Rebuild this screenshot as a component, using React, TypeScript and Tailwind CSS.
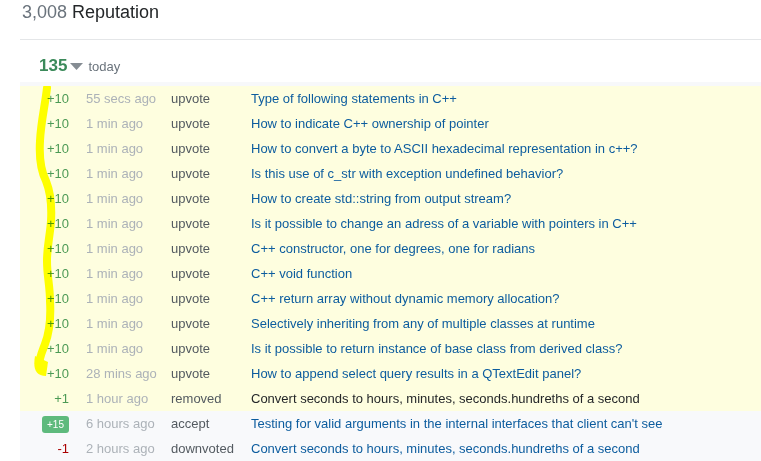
import React from "react";

type Row = {
  amount: string;
  kind: "up" | "badge" | "down";
  time: string;
  type: string;
  title: string;
  link: boolean;
  highlight: boolean;
};

const rows: Row[] = [
  { amount: "+10", kind: "up", time: "55 secs ago", type: "upvote", title: "Type of following statements in C++", link: true, highlight: true },
  { amount: "+10", kind: "up", time: "1 min ago", type: "upvote", title: "How to indicate C++ ownership of pointer", link: true, highlight: true },
  { amount: "+10", kind: "up", time: "1 min ago", type: "upvote", title: "How to convert a byte to ASCII hexadecimal representation in c++?", link: true, highlight: true },
  { amount: "+10", kind: "up", time: "1 min ago", type: "upvote", title: "Is this use of c_str with exception undefined behavior?", link: true, highlight: true },
  { amount: "+10", kind: "up", time: "1 min ago", type: "upvote", title: "How to create std::string from output stream?", link: true, highlight: true },
  { amount: "+10", kind: "up", time: "1 min ago", type: "upvote", title: "Is it possible to change an adress of a variable with pointers in C++", link: true, highlight: true },
  { amount: "+10", kind: "up", time: "1 min ago", type: "upvote", title: "C++ constructor, one for degrees, one for radians", link: true, highlight: true },
  { amount: "+10", kind: "up", time: "1 min ago", type: "upvote", title: "C++ void function", link: true, highlight: true },
  { amount: "+10", kind: "up", time: "1 min ago", type: "upvote", title: "C++ return array without dynamic memory allocation?", link: true, highlight: true },
  { amount: "+10", kind: "up", time: "1 min ago", type: "upvote", title: "Selectively inheriting from any of multiple classes at runtime", link: true, highlight: true },
  { amount: "+10", kind: "up", time: "1 min ago", type: "upvote", title: "Is it possible to return instance of base class from derived class?", link: true, highlight: true },
  { amount: "+10", kind: "up", time: "28 mins ago", type: "upvote", title: "How to append select query results in a QTextEdit panel?", link: true, highlight: true },
  { amount: "+1", kind: "up", time: "1 hour ago", type: "removed", title: "Convert seconds to hours, minutes, seconds.hundreths of a second", link: false, highlight: true },
  { amount: "+15", kind: "badge", time: "6 hours ago", type: "accept", title: "Testing for valid arguments in the internal interfaces that client can't see", link: true, highlight: false },
  { amount: "-1", kind: "down", time: "2 hours ago", type: "downvoted", title: "Convert seconds to hours, minutes, seconds.hundreths of a second", link: true, highlight: false },
];

function Amount({ row }: { row: Row }) {
  if (row.kind === "badge") {
    return (
      <span className="inline-block rounded-[3px] bg-[#5eba7d] px-[5px] py-[1px] text-[10px] leading-[15px] text-white">
        {row.amount}
      </span>
    );
  }
  return <span className={row.kind === "down" ? "text-[#a00]" : "text-[#4c9a55]"}>{row.amount}</span>;
}

export default function App() {
  return (
    <div className="h-[461px] w-[761px] overflow-hidden bg-white font-['Liberation_Sans',Arial,sans-serif]">
      {/* header */}
      <div className="pl-[22px] pt-[1px] text-[18px] leading-[22px]">
        <span className="text-[#6a737c]">3,008</span> <span className="text-[#242729]">Reputation</span>
      </div>
      <div className="ml-5 mt-[16px] border-t border-[#e4e6e8]" />

      {/* day summary */}
      <div className="ml-5 mt-[13px] flex items-center pl-[19px] leading-[22px]">
        <span className="text-[17px] font-bold text-[#3b8a5a]">135</span>
        <svg width="13" height="8" viewBox="0 0 13 8" className="ml-[3px] mt-[2px]">
          <path d="M0 0 L13 0 L6.5 7 Z" fill="#858c93" />
        </svg>
        <span className="ml-[5px] mt-[3px] text-[13px] text-[#6a737c]">today</span>
      </div>

      {/* table */}
      <div className="relative ml-5 mt-[4px] border-t-[4px] border-[#f7f8fa] text-[13px]">
        {rows.map((row, i) => (
          <div
            key={i}
            className={`flex h-[25px] items-center ${row.highlight ? "bg-[#fefedf]" : "bg-[#f8f9fb]"}`}
          >
            <div className="w-[49px] text-right">
              <Amount row={row} />
            </div>
            <div className="ml-[17px] w-[85px] text-[#acb2b8]">{row.time}</div>
            <div className="w-[80px] text-[#535a60]">{row.type}</div>
            <div className={`whitespace-nowrap ${row.link ? "text-[#0c5c9e]" : "text-[#242729]"}`}>{row.title}</div>
          </div>
        ))}

        {/* highlighter scribble, multiplied so the text shows through */}
        <svg className="pointer-events-none absolute left-0 top-0 mix-blend-multiply" width="60" height="300" viewBox="0 0 60 300">
          <path
            d="M27 2 C25 20 21 35 20 55 C19 72 21 85 26 95 C30 105 32 118 31 135 C30 150 27 160 27 175 C27 190 30 200 30 215 C31 232 30 245 25 258 C22 266 19 272 19 280"
            stroke="#ffff00"
            strokeWidth="8"
            strokeLinecap="round"
            strokeLinejoin="round"
            fill="none"
          />
          <path d="M15 270 C13 282 15 290 26 290 L28 276 Z" fill="#ffff00" />
        </svg>
      </div>
    </div>
  );
}
